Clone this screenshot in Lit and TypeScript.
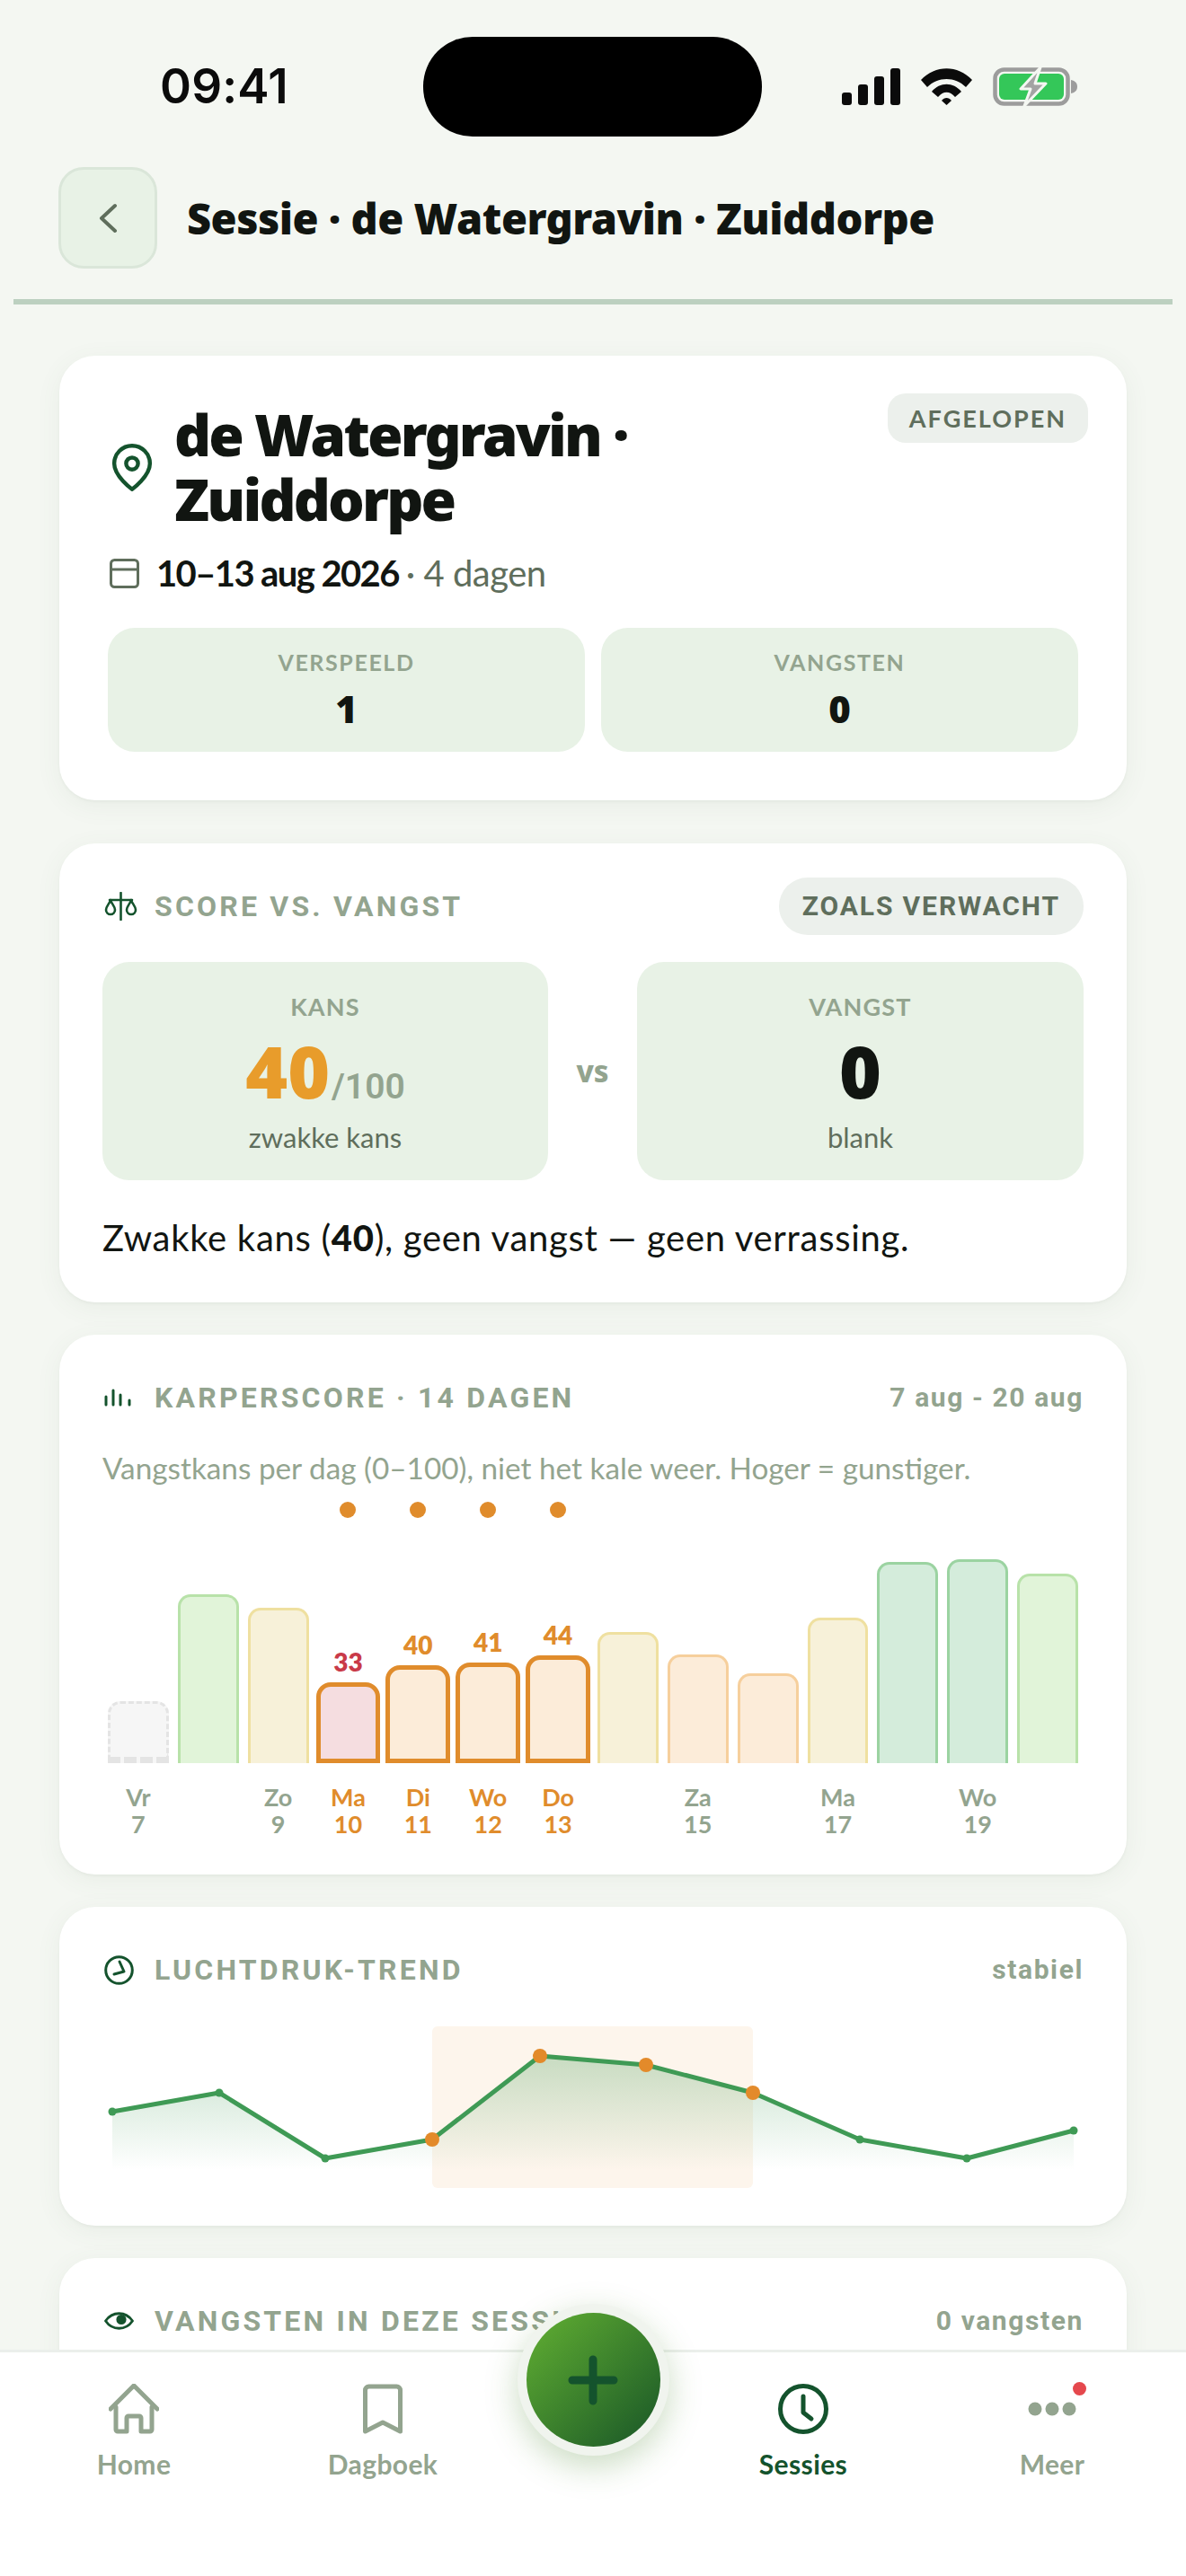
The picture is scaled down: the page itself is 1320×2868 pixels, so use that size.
import { LitElement, html, css, svg } from "lit";
import { customElement } from "lit/decorators.js";

type Tone = "none" | "lg" | "ye" | "or" | "dg" | "sr" | "so";
const BARS: { h: number; tone: Tone; v?: number }[] = [
  { h: 69, tone: "none" },
  { h: 188, tone: "lg" },
  { h: 173, tone: "ye" },
  { h: 90, tone: "sr", v: 33 },
  { h: 109, tone: "so", v: 40 },
  { h: 112, tone: "so", v: 41 },
  { h: 120, tone: "so", v: 44 },
  { h: 146, tone: "ye" },
  { h: 121, tone: "or" },
  { h: 100, tone: "or" },
  { h: 162, tone: "ye" },
  { h: 224, tone: "dg" },
  { h: 227, tone: "dg" },
  { h: 211, tone: "lg" },
];
const DAYS: ([string, string] | null)[] = [
  ["Vr", "7"], null, ["Zo", "9"], ["Ma", "10"], ["Di", "11"], ["Wo", "12"], ["Do", "13"],
  null, ["Za", "15"], null, ["Ma", "17"], null, ["Wo", "19"], null,
];
const PTS: [number, number][] = [
  [11, 111], [130, 90], [248, 163], [367, 142], [487, 49],
  [605, 59], [724, 90], [843, 142], [962, 163], [1081, 132],
];
const BASE = 176;

@customElement("app-root")
export class AppRoot extends LitElement {
  static styles = css`
    :host { display: block; width: 1320px; height: 2868px; position: relative; overflow: hidden;
      background: #f4f7f2; font-family: "Lato", "Noto Sans", sans-serif; color: #111511; }
    * { box-sizing: border-box; }
    svg { display: block; flex: none; }
    .page { height: 2616px; overflow: hidden; }
    .status { display: grid; grid-template-columns: 471px 377px 1fr; align-items: center; padding-top: 41px; }
    .time { padding-left: 178px; font: 600 53px/111px "Inter", sans-serif; color: #0b0b0b; letter-spacing: 0.2px; }
    .island { height: 111px; border-radius: 55px; background: #000; }
    .sys { display: flex; align-items: center; padding-left: 89px; gap: 23px; }
    .header { display: flex; align-items: center; gap: 33px; margin-top: 34px; padding: 0 65px; }
    .back { width: 110px; height: 113px; border-radius: 28px; background: #e8f2e6; border: 3px solid #dae6d9;
      display: flex; align-items: center; justify-content: center; }
    .htitle { font: 900 47px/60px "Noto Sans", sans-serif; letter-spacing: -0.5px; color: #111511; white-space: nowrap; }
    .rule { height: 6px; margin: 34px 15px 0; background: #bcd0c0; }
    .cards { padding: 57px 66px 0; display: flex; flex-direction: column; gap: 36px; }
    .card { background: #fff; border-radius: 40px; box-shadow: 0 2px 3px rgba(90,110,90,.05), 0 6px 28px rgba(90,110,90,.07); padding: 38px 48px; }
    .hero { padding: 42px 54px 54px; margin-bottom: 12px; }
    .herotop { display: flex; align-items: flex-start; justify-content: space-between; }
    .place { display: flex; align-items: center; gap: 24px; padding-left: 4px; margin-top: 10px; }
    .place h1 { margin: 0; width: 560px; font: 900 64px/72px "Noto Sans", sans-serif; letter-spacing: -2.8px; color: #111511; }
    .status-badge { height: 55px; padding: 0 24px; margin-right: -11px; border-radius: 20px; background: #ecf0ec;
      color: #5f6e5c; font: 700 27px/55px "Lato", sans-serif; letter-spacing: 2px; }
    .date { display: flex; align-items: center; margin-top: 22px; padding-left: 2px; height: 48px; font-size: 40px; }
    .date b { font-weight: 700; margin-left: 19px; letter-spacing: -1.6px; }
    .date span { color: #5f6e5c; margin-left: 8px; letter-spacing: -0.5px; }
    .stats { display: grid; grid-template-columns: 1fr 1fr; gap: 18px; margin-top: 37px; }
    .stat { height: 138px; border-radius: 30px; background: #e8f2e6; display: flex; flex-direction: column; align-items: center; padding-top: 21px; }
    .stat small { font: 700 25px/34px "Lato", sans-serif; letter-spacing: 1.6px; color: #93a48f; }
    .stat strong { font: 900 42px/50px "Noto Sans", sans-serif; margin-top: 10px; }
    .head { display: flex; align-items: center; height: 64px; }
    .head .ic { width: 58px; flex: none; padding-left: 2px; }
    .head h2 { margin: 0; font: 700 32px/40px "Roboto", sans-serif; letter-spacing: 3.2px; color: #93a48f; flex: 1; white-space: nowrap; }
    .head em { font: 700 30px/40px "Roboto", sans-serif; font-style: normal; letter-spacing: 1.6px; color: #93a48f; }
    .pill { height: 64px; padding: 0 26px; border-radius: 32px; background: #ecf0ec; color: #5f6e5c;
      font: 700 30px/64px "Roboto", sans-serif; letter-spacing: 1.9px; }
    .versus { display: grid; grid-template-columns: 496px 1fr 497px; align-items: center; margin-top: 30px; }
    .vbox { height: 243px; border-radius: 30px; background: #e8f2e6; display: flex; flex-direction: column; align-items: center; padding-top: 36px; }
    .vbox small { font: 700 27px/28px "Lato", sans-serif; letter-spacing: 1.2px; color: #93a48f; }
    .vbig { display: flex; align-items: baseline; height: 84px; margin-top: 15px; line-height: 84px; }
    .vbig b { font: 900 80px/84px "Noto Sans", sans-serif; }
    .vbig .or { color: #e89c2b; }
    .vbig i { font: 600 39px/84px "Roboto", sans-serif; font-style: normal; color: #93a48f; margin-left: 2px; }
    .vbox span { font-size: 31px; line-height: 40px; color: #5f6e5c; margin-top: 12px; }
    .vs { text-align: center; font: 800 33px/40px "Noto Sans", sans-serif; color: #93a48f; }
    .sentence { margin: 36px 0 0; font-size: 40px; line-height: 56px; padding-bottom: 6px; letter-spacing: 0.7px; }
    .sentence b { font-weight: 900; }
    .chartcard { padding-bottom: 41px; }
    .desc { margin: 22px 0 0; font-size: 33.3px; line-height: 48px; color: #93a48f; }
    .grid14 { display: grid; grid-template-columns: repeat(14, 1fr); gap: 10px; padding: 0 6px; }
    .dots { margin-top: 14px; height: 18px; }
    .dots div { display: flex; justify-content: center; }
    .dots i { width: 18px; height: 18px; border-radius: 50%; background: #e08c2c; }
    .chart { height: 273px; align-items: end; }
    .col { display: flex; flex-direction: column; justify-content: flex-end; align-items: stretch; min-width: 0; }
    .val { font: 800 28px/34px "Lato", sans-serif; text-align: center; margin-bottom: 6px; color: #e08c2c; }
    .val.red { color: #c93a48; }
    .bar { border: 3px solid; border-bottom: 0; border-radius: 14px 14px 0 0; }
    .t-none { border: 3px dashed #e4e4e4; border-bottom-width: 7px; background: #f6f6f6; }
    .t-lg { background: #e1f4d9; border-color: #b8e2a9; }
    .t-ye { background: #f7f1d9; border-color: #efe0a0; }
    .t-or { background: #fcecd9; border-color: #f6cf9c; }
    .t-dg { background: #d4ecdb; border-color: #9bd3a1; }
    .t-sr, .t-so { margin: 0 -2px; border: 5px solid #e08c2c; border-radius: 16px 16px 0 0; }
    .t-sr { background: #f5dde0; }
    .t-so { background: #fcecd9; }
    .days { margin-top: 23px; }
    .day { text-align: center; font-size: 27px; line-height: 30px; font-weight: 700; color: #93a48f; }
    .day.on { color: #e08c2c; }
    .spark { margin-top: 15px; }
    .tail { height: 200px; }
    .nav { position: absolute; left: 0; right: 0; bottom: 0; height: 252px; background: #fff; border-top: 3px solid #ebefeb;
      display: grid; grid-template-columns: 278px 276px 192px 276px 278px; padding: 35px 10px 0; align-items: start; }
    .item { display: flex; flex-direction: column; align-items: center; color: #93a48f; position: relative; }
    .item .ico { height: 56px; display: flex; align-items: center; justify-content: center; }
    .item span { margin-top: 17px; font-size: 30px; line-height: 32px; font-weight: 700; letter-spacing: 0.4px; }
    .item.on { color: #14532d; }
    .fabcell { position: relative; }
    .fab { position: absolute; left: 50%; top: -89px; width: 169px; height: 169px; margin-left: -84.5px; border-radius: 50%;
      background: #f0f4ee; padding: 10px; box-shadow: 0 12px 36px rgba(70,130,40,.28); }
    .fab div { width: 149px; height: 149px; border-radius: 50%; background: linear-gradient(135deg, #62b032, #185527);
      display: flex; align-items: center; justify-content: center; }
    .badge { position: absolute; top: -2px; left: 50%; margin-left: 23px; width: 15px; height: 15px; border-radius: 50%; background: #e5484d; }
  `;

  private signal() {
    return html`<svg width="65" height="41" viewBox="0 0 65 41" fill="#0b0b0b">
      <rect x="0" y="27" width="11" height="14" rx="3"/><rect x="18" y="18" width="11" height="23" rx="3"/>
      <rect x="36" y="9" width="11" height="32" rx="3"/><rect x="54" y="0" width="11" height="41" rx="3"/></svg>`;
  }
  private wifi() {
    return html`<svg width="57" height="41" viewBox="0 0 57 41" fill="#0b0b0b">
      <path d="M0 13C16-4 41-4 57 13L50 21C38 9 19 9 7 21Z"/>
      <path d="M12 26C21 15 36 15 45 26L38 32C32 25 25 25 19 32Z"/>
      <path d="M23 36C26 32 31 32 34 36L28.5 41Z"/></svg>`;
  }
  private battery() {
    return html`<svg width="94" height="43" viewBox="0 0 94 43">
      <rect x="2.5" y="2.5" width="81" height="38" rx="10" fill="none" stroke="#9c9c9c" stroke-width="4.5"/>
      <rect x="7" y="7" width="72" height="29" rx="6" fill="#34c759"/>
      <path d="M87 14c5 1 7 4 7 7.500s-2 6.500-7 7.500z" fill="#9c9c9c"/>
      <path d="M53 0L31 24H42L35 43L59 18H47Z" fill="#a3a3a3" stroke="#f4f7f2" stroke-width="3" stroke-linejoin="round"/></svg>`;
  }
  private bars() {
    return html`<svg width="30" height="20" viewBox="0 0 30 20" stroke="#14532d" stroke-width="3" stroke-linecap="round">
      <path d="M2 9V18M10 2V18M18 7V18M28 13V18"/></svg>`;
  }
  private scale() {
    return html`<svg width="38" height="32" viewBox="0 0 38 32" fill="none" stroke="#14532d" stroke-width="2.600" stroke-linecap="round" stroke-linejoin="round">
      <path d="M18.500 1V31M6 9H31"/>
      <path d="M7 9C6 13 2 16 2 20A5 5 0 0 0 12 20C12 16 8 13 7 9Z"/>
      <path d="M30 9C29 13 25 16 25 20A5 5 0 0 0 35 20C35 16 31 13 30 9Z"/></svg>`;
  }
  private clockSm() {
    return html`<svg width="33" height="33" viewBox="0 0 33 33" fill="none" stroke="#14532d" stroke-width="3" stroke-linecap="round" stroke-linejoin="round">
      <circle cx="16.500" cy="16.500" r="14.800"/><path d="M17 7L22 18L11 21"/></svg>`;
  }
  private eye() {
    return html`<svg width="33" height="20" viewBox="0 0 33 20" fill="none" stroke="#14532d" stroke-width="2.800" stroke-linejoin="round">
      <path d="M1.500 10C9-1 24-1 31.500 10C24 21 9 21 1.500 10Z"/><circle cx="19" cy="8.500" r="4.200" fill="#14532d"/></svg>`;
  }
  private spark() {
    const d = PTS.map((p, i) => `${i ? "L" : "M"}${p[0]} ${p[1]}`).join(" ");
    const area = `${d} L${PTS[PTS.length - 1][0]} ${BASE} L${PTS[0][0]} ${BASE} Z`;
    return html`<svg class="spark" width="1092" height="200" viewBox="0 0 1092 200">
      <defs><linearGradient id="g" x1="0" y1="0" x2="0" y2="1">
        <stop offset="0" stop-color="#3f9a55" stop-opacity=".28"/><stop offset="1" stop-color="#3f9a55" stop-opacity="0"/>
      </linearGradient></defs>
      <rect x="367" y="16" width="357" height="180" rx="6" fill="#fdf5ec"/>
      <path d="${area}" fill="url(#g)"/>
      <path d="${d}" fill="none" stroke="#3f9a55" stroke-width="5" stroke-linejoin="round"/>
      ${PTS.map((p, i) => i >= 3 && i <= 6
        ? svg`<circle cx="${p[0]}" cy="${p[1]}" r="8" fill="#e38a2a"/>`
        : svg`<circle cx="${p[0]}" cy="${p[1]}" r="4.500" fill="#3f9a55"/>`)}
    </svg>`;
  }

  render() {
    return html`
      <div class="page">
        <div class="status">
          <div class="time">09:41</div>
          <div class="island"></div>
          <div class="sys">${this.signal()}${this.wifi()}${this.battery()}</div>
        </div>
        <div class="header">
          <div class="back"><svg width="24" height="34" viewBox="0 0 24 34" fill="none" stroke="#5f6e5c" stroke-width="4" stroke-linecap="round" stroke-linejoin="round"><path d="M20 3L5 17L20 31"/></svg></div>
          <div class="htitle">Sessie · de Watergravin · Zuiddorpe</div>
        </div>
        <div class="rule"></div>
        <div class="cards">
          <section class="card hero">
            <div class="herotop">
              <div class="place">
                <svg width="46" height="53" viewBox="2 0 20 24" fill="none" stroke="#14532d" stroke-width="2" stroke-linejoin="round"><path d="M21 10c0 6.500-9 13-9 13s-9-6.500-9-13a9 9 0 0 1 18 0z"/><circle cx="12" cy="10" r="3"/></svg>
                <h1>de Watergravin · Zuiddorpe</h1>
              </div>
              <div class="status-badge">AFGELOPEN</div>
            </div>
            <div class="date">
              <svg width="33" height="33" viewBox="0 0 33 33" fill="none" stroke="#5f6e5c" stroke-width="3"><rect x="1.500" y="1.500" width="30" height="30" rx="4"/><path d="M1.500 12H31.500"/></svg>
              <b>10–13 aug 2026</b><span>· 4 dagen</span>
            </div>
            <div class="stats">
              <div class="stat"><small>VERSPEELD</small><strong>1</strong></div>
              <div class="stat"><small>VANGSTEN</small><strong>0</strong></div>
            </div>
          </section>

          <section class="card">
            <div class="head"><div class="ic">${this.scale()}</div><h2>SCORE VS. VANGST</h2><div class="pill">ZOALS VERWACHT</div></div>
            <div class="versus">
              <div class="vbox"><small>KANS</small><div class="vbig"><b class="or">40</b><i>/100</i></div><span>zwakke kans</span></div>
              <div class="vs">vs</div>
              <div class="vbox"><small>VANGST</small><div class="vbig"><b>0</b></div><span>blank</span></div>
            </div>
            <p class="sentence">Zwakke kans (<b>40</b>), geen vangst — geen verrassing.</p>
          </section>

          <section class="card chartcard">
            <div class="head"><div class="ic">${this.bars()}</div><h2>KARPERSCORE · 14 DAGEN</h2><em>7 aug - 20 aug</em></div>
            <p class="desc">Vangstkans per dag (0–100), niet het kale weer. Hoger = gunstiger.</p>
            <div class="grid14 dots">${BARS.map((b) => html`<div>${b.v ? html`<i></i>` : ""}</div>`)}</div>
            <div class="grid14 chart">
              ${BARS.map((b) => html`<div class="col">
                ${b.v ? html`<div class="val ${b.tone === "sr" ? "red" : ""}">${b.v}</div>` : ""}
                <div class="bar t-${b.tone}" style="height:${b.h}px"></div>
              </div>`)}
            </div>
            <div class="grid14 days">
              ${DAYS.map((d, i) => html`<div class="day ${BARS[i].v ? "on" : ""}">${d ? html`${d[0]}<br />${d[1]}` : ""}</div>`)}
            </div>
          </section>

          <section class="card">
            <div class="head"><div class="ic">${this.clockSm()}</div><h2>LUCHTDRUK-TREND</h2><em>stabiel</em></div>
            ${this.spark()}
          </section>

          <section class="card tail">
            <div class="head"><div class="ic">${this.eye()}</div><h2>VANGSTEN IN DEZE SESSIE</h2><em>0 vangsten</em></div>
          </section>
        </div>
      </div>

      <nav class="nav">
        <div class="item"><div class="ico"><svg width="56" height="56" viewBox="0 0 56 56" fill="none" stroke="currentColor" stroke-width="5" stroke-linecap="round" stroke-linejoin="round"><path d="M2 28L28 2L54 28"/><path d="M8 26V51a2 2 0 0 0 2 2H20V38a2 2 0 0 1 2-2H34a2 2 0 0 1 2 2V53H46a2 2 0 0 0 2-2V26"/></svg></div><span>Home</span></div>
        <div class="item"><div class="ico"><svg width="44" height="56" viewBox="0 0 44 56" fill="none" stroke="currentColor" stroke-width="5" stroke-linecap="round" stroke-linejoin="round"><path d="M2.500 7a4 4 0 0 1 4-4H37.500a4 4 0 0 1 4 4V53L22 43L2.500 53Z"/></svg></div><span>Dagboek</span></div>
        <div class="fabcell"><div class="fab"><div><svg width="56" height="56" viewBox="0 0 56 56" stroke="#14532d" stroke-width="9" stroke-linecap="round"><path d="M28 5V51M5 28H51"/></svg></div></div></div>
        <div class="item on"><div class="ico"><svg width="56" height="56" viewBox="0 0 56 56" fill="none" stroke="currentColor" stroke-width="5" stroke-linecap="round" stroke-linejoin="round"><circle cx="28" cy="28" r="25.500"/><path d="M28 14V32L37 39"/></svg></div><span>Sessies</span></div>
        <div class="item"><div class="ico"><svg width="54" height="16" viewBox="0 0 54 16" fill="currentColor"><circle cx="8" cy="8" r="7.500"/><circle cx="27" cy="8" r="7.500"/><circle cx="46" cy="8" r="7.500"/></svg></div><i class="badge"></i><span>Meer</span></div>
      </nav>
    `;
  }
}
